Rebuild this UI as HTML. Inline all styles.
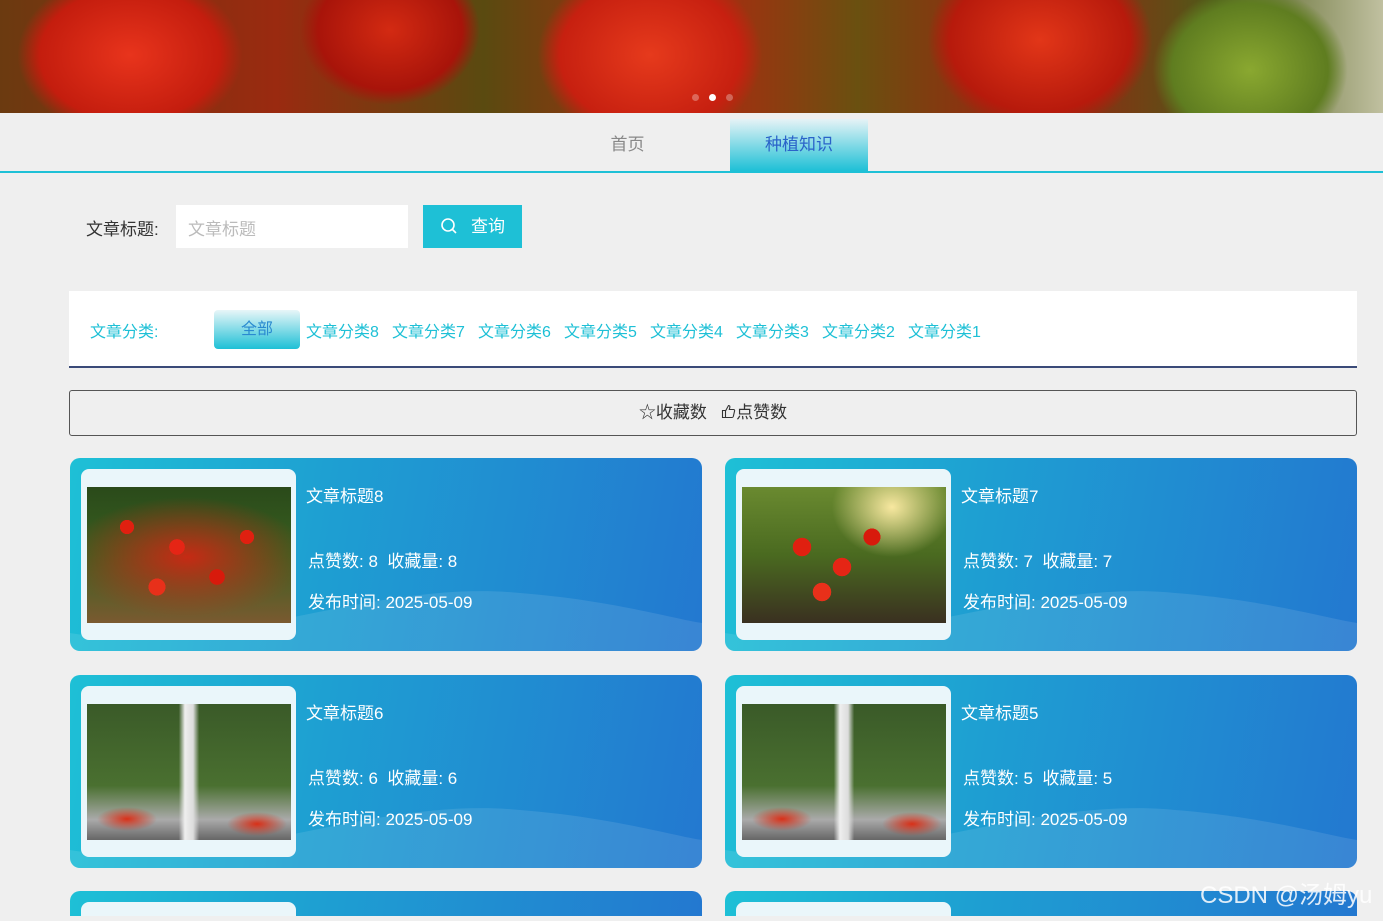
<!DOCTYPE html>
<html><head><meta charset="utf-8"><style>
*{margin:0;padding:0;box-sizing:border-box}
html,body{width:1383px;height:921px;overflow:hidden}
body{background:#efefef;font-family:"Liberation Sans","Noto Sans CJK SC",sans-serif;position:relative}
.banner{position:absolute;left:0;top:0;width:1383px;height:113px;overflow:hidden;
background:
radial-gradient(ellipse 150px 110px at 130px 55px,#e8341c 0,#c41d0e 60%,transparent 75%),
radial-gradient(ellipse 120px 100px at 390px 30px,#d32a12 0,#a8140a 60%,transparent 75%),
radial-gradient(ellipse 150px 120px at 650px 55px,#e63a1c 0,#c72010 60%,transparent 75%),
radial-gradient(ellipse 150px 120px at 1040px 40px,#e23618 0,#b71a0c 60%,transparent 75%),
radial-gradient(ellipse 130px 110px at 1250px 70px,#8aa830 0,#5f7d20 60%,transparent 75%),
linear-gradient(90deg,#6b3a10,#9a2a10 20%,#5a4a10 35%,#b02810 50%,#6a5010 62%,#a02010 75%,#4d5a18 88%,#c0c0a0)}
.dot{position:absolute;top:94px;width:7px;height:7px;border-radius:50%}
.nav{position:absolute;top:113px;left:0;width:1383px;height:60px;border-bottom:2px solid #1ec0d6}
.nav .a{position:absolute;left:585px;top:0;width:85px;height:58px;line-height:64px;text-align:center;color:#888;font-size:17px}
.nav .b{position:absolute;left:730px;top:6px;width:138px;height:52px;line-height:52px;text-align:center;color:#2a63c9;font-size:17px;background:linear-gradient(#e6f3f6,#1ec0d6)}
.lbl{position:absolute;left:86px;top:215px;font-size:17px;color:#333}
.inp{position:absolute;left:176px;top:205px;width:232px;height:43px;background:#fff;color:#bbb;font-size:17px;padding:10px 12px}
.btn{position:absolute;left:423px;top:205px;width:99px;height:43px;background:#1ec0d6;color:#fff;font-size:17px;line-height:43px;padding-left:48px}
.cats{position:absolute;left:69px;top:291px;width:1288px;height:77px;background:#fff;border-bottom:2px solid #3a4a78}
.cats span{position:absolute;top:27px;font-size:16px;color:#1ec0d6}
.all{position:absolute;left:145px;top:19px;width:86px;height:39px;border-radius:4px;background:linear-gradient(#e8f6f8,#1ec0d6);color:#2a8ad0;text-align:center;line-height:39px;font-size:16px}
.sort{position:absolute;left:69px;top:390px;width:1288px;height:46px;border:1px solid #555;border-radius:3px;font-size:17px;color:#333;text-align:center;line-height:44px}
.card{position:absolute;width:632px;height:193px;border-radius:10px;overflow:hidden;background:linear-gradient(100deg,#1ec0d6,#1e9fd2 40%,#2378d0)}
.card .wave{position:absolute;left:0;top:0}
.card .ib{position:absolute;left:11px;top:11px;width:215px;height:171px;background:#eaf6fa;border-radius:8px}
.card .im{position:absolute;left:6px;top:18px;width:204px;height:136px}
.card .t{position:absolute;left:236px;top:24px;color:#fff;font-size:17px}
.card .s{position:absolute;left:238px;top:89px;color:#fff;font-size:17px}
.card .d{position:absolute;left:238px;top:130px;color:#fff;font-size:17px}
.im1{background:radial-gradient(circle 10px at 40px 40px,#e02010 70%,transparent 72%),radial-gradient(circle 11px at 90px 60px,#e52515 70%,transparent 72%),radial-gradient(circle 11px at 130px 90px,#d81a0c 70%,transparent 72%),radial-gradient(circle 12px at 70px 100px,#e8301a 70%,transparent 72%),radial-gradient(circle 10px at 160px 50px,#e02010 70%,transparent 72%),radial-gradient(ellipse 120px 60px at 100px 70px,#c62a14,transparent),linear-gradient(#2a4a1a,#3a6020 50%,#7a5a30)}
.im2{background:radial-gradient(circle 13px at 60px 60px,#e02010 70%,transparent 72%),radial-gradient(circle 13px at 100px 80px,#e52515 70%,transparent 72%),radial-gradient(circle 12px at 130px 50px,#d81a0c 70%,transparent 72%),radial-gradient(circle 13px at 80px 105px,#e8301a 70%,transparent 72%),radial-gradient(ellipse 60px 50px at 150px 20px,#f8e8a0,transparent),linear-gradient(#6a8a30,#4a6a20 50%,#3a3020)}
.im3{background:linear-gradient(90deg,transparent 45%,#eee 48%,#ddd 52%,transparent 55%),radial-gradient(ellipse 30px 12px at 40px 115px,#d83018,transparent),radial-gradient(ellipse 30px 12px at 170px 120px,#d83018,transparent),linear-gradient(#3a5a28,#4a7030 60%,#aaa 85%,#666)}
.wm{position:absolute;left:1200px;top:882px;font-size:24px;line-height:28px;color:rgba(255,255,255,.85)}
</style></head><body>
<div class="banner"></div>
<div class="dot" style="left:692px;background:rgba(255,255,255,.3)"></div>
<div class="dot" style="left:709px;background:#fff"></div>
<div class="dot" style="left:726px;background:rgba(255,255,255,.3)"></div>
<div class="nav"><div class="a">首页</div><div class="b">种植知识</div></div>
<div class="lbl">文章标题:</div>
<div class="inp">文章标题</div>
<div class="btn"><svg style="position:absolute;left:17px;top:12px" width="18" height="18" viewBox="0 0 18 18"><circle cx="8" cy="8" r="6" fill="none" stroke="#fff" stroke-width="1.6"/><path d="M12.5 12.5L16 16" stroke="#fff" stroke-width="1.6"/></svg>查询</div>
<div class="cats"><span style="left:21px">文章分类:</span><div class="all">全部</div>
<span style="left:237px">文章分类8</span><span style="left:323px">文章分类7</span><span style="left:409px">文章分类6</span><span style="left:495px">文章分类5</span><span style="left:581px">文章分类4</span><span style="left:667px">文章分类3</span><span style="left:753px">文章分类2</span><span style="left:839px">文章分类1</span></div>
<div class="sort">☆收藏数 &nbsp;&nbsp;<svg width="15" height="15" viewBox="0 0 15 15" style="vertical-align:-1px"><path d="M1.5 6.5h3v7h-3zM4.5 7l3-5.5c1.2 0 1.6.8 1.3 2L8.3 5.5h4.2c.8 0 1.3.7 1.1 1.4l-1.3 5.6c-.2.6-.6 1-1.2 1H4.5" fill="none" stroke="#333" stroke-width="1.1"/></svg>点赞数</div>

<div class="card" style="left:70px;top:458px"><svg class="wave" width="632" height="193"><path d="M0 175 C150 200 300 120 450 135 C540 142 600 160 632 165 L632 193 L0 193Z" fill="rgba(255,255,255,.1)"/></svg><div class="ib"><div class="im im1"></div></div><div class="t">文章标题8</div><div class="s">点赞数: 8&nbsp; 收藏量: 8</div><div class="d">发布时间: 2025-05-09</div></div>
<div class="card" style="left:725px;top:458px"><svg class="wave" width="632" height="193"><path d="M0 175 C150 200 300 120 450 135 C540 142 600 160 632 165 L632 193 L0 193Z" fill="rgba(255,255,255,.1)"/></svg><div class="ib"><div class="im im2"></div></div><div class="t">文章标题7</div><div class="s">点赞数: 7&nbsp; 收藏量: 7</div><div class="d">发布时间: 2025-05-09</div></div>
<div class="card" style="left:70px;top:675px"><svg class="wave" width="632" height="193"><path d="M0 175 C150 200 300 120 450 135 C540 142 600 160 632 165 L632 193 L0 193Z" fill="rgba(255,255,255,.1)"/></svg><div class="ib"><div class="im im3"></div></div><div class="t">文章标题6</div><div class="s">点赞数: 6&nbsp; 收藏量: 6</div><div class="d">发布时间: 2025-05-09</div></div>
<div class="card" style="left:725px;top:675px"><svg class="wave" width="632" height="193"><path d="M0 175 C150 200 300 120 450 135 C540 142 600 160 632 165 L632 193 L0 193Z" fill="rgba(255,255,255,.1)"/></svg><div class="ib"><div class="im im3"></div></div><div class="t">文章标题5</div><div class="s">点赞数: 5&nbsp; 收藏量: 5</div><div class="d">发布时间: 2025-05-09</div></div>
<div class="card" style="left:70px;top:891px;height:25px;border-radius:10px 10px 0 0"><div class="ib" style="height:14px;border-radius:8px 8px 0 0"></div></div>
<div class="card" style="left:725px;top:891px;height:25px;border-radius:10px 10px 0 0"><div class="ib" style="height:14px;border-radius:8px 8px 0 0"></div></div>
<div class="wm">CSDN @汤姆yu</div>
</body></html>
